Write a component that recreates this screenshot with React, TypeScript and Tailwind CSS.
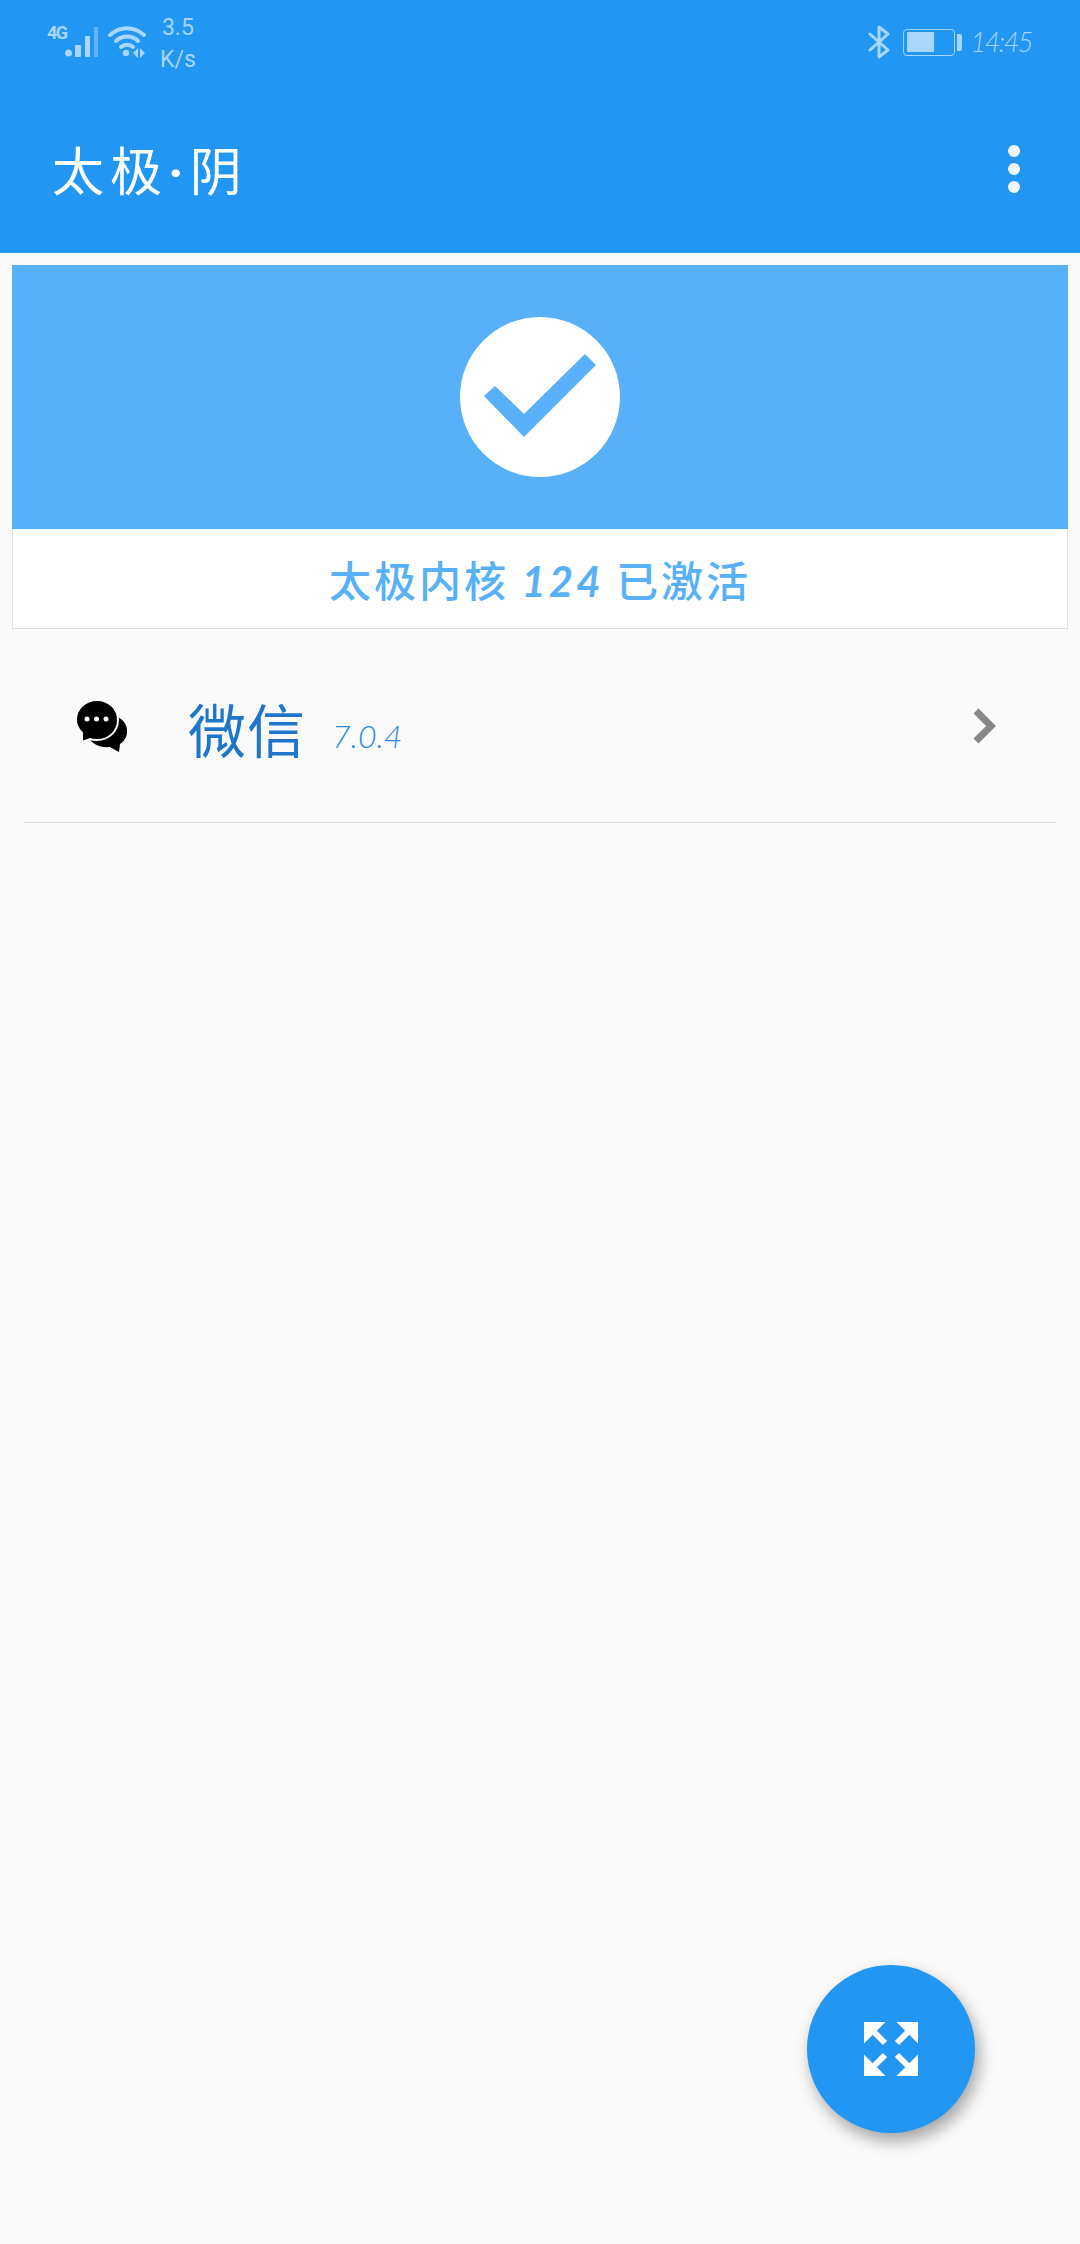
const cjk = "font-['Noto_Sans_CJK_SC',sans-serif]";

function SignalIcon() {
  return (
    <svg width="34" height="32" viewBox="0 0 34 32" className="mt-[27px] -ml-px">
      <circle cx="3.5" cy="26" r="3.5" fill="#a9d6fb" />
      <rect x="10" y="18" width="6" height="12" rx="1" fill="#a9d6fb" />
      <rect x="20" y="9" width="5" height="21" rx="1" fill="#a9d6fb" />
      <rect x="29" y="0" width="4" height="30" fill="#61b4f7" />
    </svg>
  );
}

function WifiIcon() {
  return (
    <svg width="38" height="32" viewBox="0 0 38 32">
      <g fill="none" stroke="#a9d6fb" strokeWidth="4" strokeLinecap="round">
        <path d="M2 9 C12 0 26 0 36 9" />
        <path d="M8 15 C14 9 24 9 30 15" />
        <path d="M13 21 C16 18 22 18 25 21" />
      </g>
      <circle cx="18" cy="27" r="3.2" fill="#a9d6fb" />
      <path d="M30 22v10l-5-5zM32 22v10l5-5z" fill="#a9d6fb" />
    </svg>
  );
}

function BluetoothIcon() {
  return (
    <svg width="24" height="34" viewBox="0 0 24 34" className="shrink-0">
      <path
        d="M2 9 L20 25 L11 32 V2 L20 9 L2 25"
        fill="none"
        stroke="#a9d6fb"
        strokeWidth="3"
        strokeLinejoin="round"
        strokeLinecap="round"
      />
    </svg>
  );
}

function BatteryIcon() {
  return (
    <div className="flex items-center gap-[2px]">
      <div className="h-[27px] w-[52px] rounded-[4px] border-[1.5px] border-[#a9d6fb] p-[2.5px]">
        <div className="h-full w-[27px] bg-[#a9d6fb]" />
      </div>
      <div className="h-[17px] w-[5px] rounded-r-[2px] bg-[#a9d6fb]" />
    </div>
  );
}

function StatusBar() {
  return (
    <div className="flex h-[100px] items-start justify-between pl-[47px] pr-[48px]">
      <div className="flex items-start">
        <span className="mt-[24px] w-[19px] font-['Roboto',sans-serif] text-[18px] leading-[18px] font-bold tracking-[-1.5px] text-[#a9d6fb]">
          4G
        </span>
        <SignalIcon />
        <div className="mt-[26px] ml-[9px]">
          <WifiIcon />
        </div>
        <div className="mt-[12px] ml-[14px] font-['Roboto',sans-serif] text-[23px] leading-[32px] text-[#a9d6fb]">
          <div className="text-center">3.5</div>
          <div>K/s</div>
        </div>
      </div>
      <div className="mt-[25px] flex items-center">
        <BluetoothIcon />
        <div className="ml-[11px]">
          <BatteryIcon />
        </div>
        <span className="ml-[8px] font-['Lato',sans-serif] text-[27px] leading-[34px] font-light tracking-[-1.5px] text-[#a9d6fb] italic">
          14:45
        </span>
      </div>
    </div>
  );
}

function ChatBubbles() {
  return (
    <svg width="52" height="52" viewBox="0 0 52 52" className="shrink-0">
      {/* back bubble sits behind the front one, separated by a light gap */}
      <path
        d="M36 16 C45 16 52 24 51 32 C51 38 47 42 44 44 L43 52 L34 47 C24 48 15 44 12 36 Z"
        fill="#000"
      />
      <path
        d="M21 0 C33 0 42 9 42 20 C42 31 33 40 21 40 C18 40 16 40 14 39 L6 42 L6 33 C2 29 0 25 0 20 C0 9 9 0 21 0 Z"
        fill="#000"
        stroke="#fafafa"
        strokeWidth="2"
      />
      <circle cx="11" cy="19" r="2.5" fill="#fff" />
      <circle cx="20.5" cy="19" r="2.5" fill="#fff" />
      <circle cx="30" cy="19" r="2.5" fill="#fff" />
    </svg>
  );
}

// one corner arrow, rotated four times around the middle of the icon
const ARROW = "M0 0 H21.5 L12.85 8.65 L23.1 18.9 L18.9 23.1 L8.65 12.85 L0 21.5 Z";

function ExpandIcon() {
  return (
    <svg width="54" height="54" viewBox="0 0 54 54" fill="#fff">
      <path d={ARROW} />
      <path d={ARROW} transform="rotate(90 27 27)" />
      <path d={ARROW} transform="rotate(180 27 27)" />
      <path d={ARROW} transform="rotate(270 27 27)" />
    </svg>
  );
}

export default function App() {
  return (
    <div className="relative flex min-h-[2244px] flex-col bg-[#fafafa]">
      {/* App bar */}
      <header className="h-[253px] bg-[#2196f3]">
        <StatusBar />
        <div className="flex h-[153px] items-center justify-between pl-[52px] pr-[60px] pb-[10px]">
          <h1 className={`${cjk} text-[52px] leading-none font-normal tracking-[6px] text-white`}>
            太极<span className="font-['Roboto',sans-serif] font-bold">·</span>阴
          </h1>
          <div className="mb-[5px] flex flex-col gap-[6px]">
            <span className="size-[12px] rounded-full bg-[#f0f7fe]" />
            <span className="size-[12px] rounded-full bg-[#f0f7fe]" />
            <span className="size-[12px] rounded-full bg-[#f0f7fe]" />
          </div>
        </div>
      </header>

      {/* Framework status card */}
      <section className="mx-[12px] mt-[12px] border border-[#e0e0e0] border-t-0 bg-white">
        <div className="-mx-px flex h-[264px] items-center justify-center bg-[#58b0f8]">
          <div className="size-[160px] rounded-full bg-white">
            <svg width="160" height="160" viewBox="0 0 160 160">
              <path d="M24 79 L35 69 L64 97 L125 37 L136 48 L64 120 Z" fill="#58b0f8" />
            </svg>
          </div>
        </div>
        <div className="flex h-[99px] items-center justify-center pt-[2px]">
          <span className={`${cjk} text-[42px] leading-none font-medium tracking-[3px] text-[#58b0f8]`}>
            太极内核 <span className="font-['Lato',sans-serif] font-bold italic">124</span> 已激活
          </span>
        </div>
      </section>

      {/* Installed apps */}
      <div className="mx-[24px] flex h-[194px] items-center border-b border-[#e0e0e0]">
        <div className="ml-[52px]">
          <ChatBubbles />
        </div>
        <span className={`${cjk} mt-[4px] ml-[60px] text-[58px] leading-none tracking-[1px] text-[#1f75c9]`}>
          微信
        </span>
        <span className="mt-[20px] ml-[26px] font-['Lato',sans-serif] text-[32px] leading-none font-light text-[#2f88dd] italic">
          7.0.4
        </span>
        <svg width="26" height="38" viewBox="0 0 26 38" className="mr-[58px] ml-auto">
          <path d="M4 4 L19 19 L4 34" fill="none" stroke="#888888" strokeWidth="7" />
        </svg>
      </div>

      {/* Floating action button */}
      <button className="absolute top-[1965px] left-[807px] flex size-[168px] items-center justify-center rounded-full bg-[#2196f3] shadow-[4px_8px_16px_rgba(0,0,0,0.35)]">
        <ExpandIcon />
      </button>
    </div>
  );
}
